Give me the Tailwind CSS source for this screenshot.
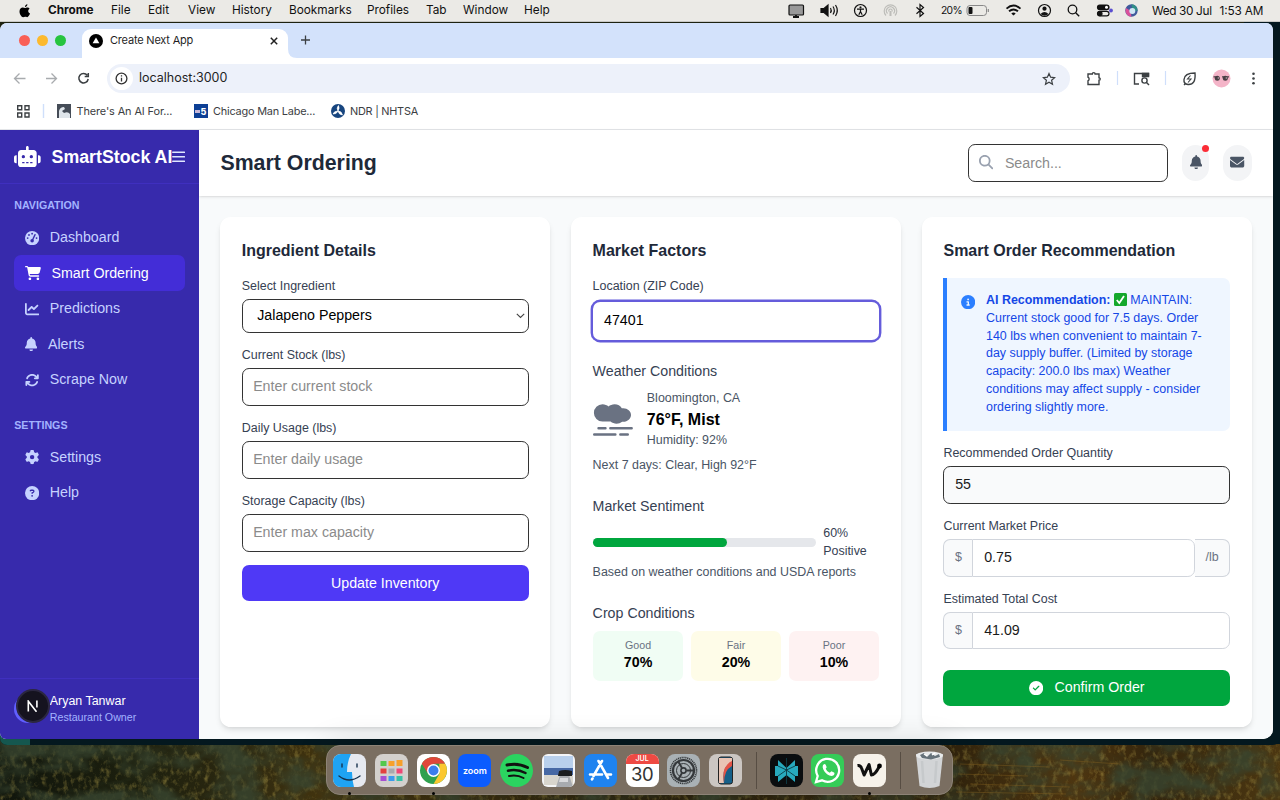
<!DOCTYPE html>
<html lang="en" class="text-[14.222px]">
<head>
<meta charset="utf-8">
<title>Smart Ordering</title>
<script src="https://cdn.jsdelivr.net/npm/@tailwindcss/browser@4"></script>
</head>
<body class="w-[1280px] h-[800px] overflow-hidden relative font-['Liberation_Sans',sans-serif] text-base bg-[#1d2210]">

<svg class="hidden">
  <symbol id="bell" viewBox="0 0 448 512"><path d="M224 0c-17.7 0-32 14.3-32 32V51.2C119 66 64 130.6 64 208v18.8c0 47-17.3 92.4-48.5 127.6l-7.4 8.3c-8.4 9.4-10.4 22.9-5.3 34.4S19.4 416 32 416H416c12.6 0 24-7.4 29.2-18.9s3.1-25-5.3-34.4l-7.4-8.3C401.3 319.2 384 273.9 384 226.8V208c0-77.4-55-142-128-156.8V32c0-17.7-14.3-32-32-32zm45.3 493.3c12-12 18.7-28.3 18.7-45.3H224 160c0 17 6.7 33.3 18.7 45.3s28.3 18.7 45.3 18.7s33.3-6.7 45.3-18.7z"/></symbol>
</svg>

<!-- Wallpaper -->
<svg class="absolute left-0 top-[738px]" width="1280" height="62" viewBox="0 0 1280 62">
  <defs>
    <linearGradient id="wp" x1="0" x2="1" y1="0" y2="0">
      <stop offset="0" stop-color="#10150c"/><stop offset=".1" stop-color="#1c1f0e"/><stop offset=".19" stop-color="#2c2810"/><stop offset=".25" stop-color="#43340f"/><stop offset=".5" stop-color="#2b2410"/><stop offset=".75" stop-color="#33250d"/><stop offset=".84" stop-color="#4f350f"/><stop offset=".9" stop-color="#33250d"/><stop offset="1" stop-color="#4c3711"/>
    </linearGradient>
    <filter id="leaf" x="0" y="0" width="100%" height="100%"><feTurbulence type="fractalNoise" baseFrequency=".19 .13" numOctaves="4" seed="21"/><feColorMatrix values="0 0 0 0 .52  0 0 0 0 .4  0 0 0 0 .08  2.6 0 0 0 -1.25"/></filter>
    <filter id="shade" x="0" y="0" width="100%" height="100%"><feTurbulence type="fractalNoise" baseFrequency=".023 .037" numOctaves="4" seed="5"/><feColorMatrix values="0 0 0 0 .04  0 0 0 0 .06  0 0 0 0 .03  3 0 0 0 -1.1"/></filter>
  </defs>
  <rect width="1280" height="62" fill="url(#wp)"/>
  <rect width="1280" height="62" filter="url(#leaf)" opacity=".42"/>
  <rect width="1280" height="62" filter="url(#shade)" opacity=".8"/>
  <g stroke="#8a6420" stroke-width="1" opacity=".4" fill="none"><path d="M960 26l90 3M958 36l70 2M970 46l100 3M1060 22l60 4M956 54l110 2"/></g>
</svg>
<div class="absolute right-0 top-[22px] w-10 h-[722px] bg-[#04181f]"></div>
<div class="absolute left-0 top-[725px] w-[1280px] h-[20px] rounded-b-lg bg-[#04181f] overflow-hidden"><div class="w-[30px] h-full bg-[#15574f]"></div></div>

<!-- Menu bar -->
<header class="absolute left-0 top-0 w-[1280px] h-[22px] bg-[#ebeae6] border-b border-[#c9c9c6] flex items-center justify-between text-[11.8px] leading-none text-[#111] font-[Inter,sans-serif]">
  <div class="flex items-center pl-[18px]">
    <svg class="w-[30px] h-[14px]" viewBox="0 0 30 14"><path d="M9.400 .2c.1 1.300-1 2.700-2.400 2.800C6.800 1.700 8 .4 9.400 .2zM11.600 4.700c-.9.6-1.400 1.300-1.400 2.400 0 1.200.7 2.100 1.800 2.500-.5 1.500-1.700 3.600-2.900 3.600-.7 0-1.100-.4-2-.4s-1.300.4-2 .4C3.500 13.200 1.500 10.200 1.500 7.500c0-2.500 1.600-4 3.300-4 .9 0 1.600.5 2.200.5.6 0 1.400-.6 2.500-.6.7 0 1.600.4 2.100 1.300z"/></svg>
    <span class="w-[63px] font-bold">Chrome</span><span class="w-[37px]">File</span><span class="w-[40px]">Edit</span><span class="w-[44px]">View</span><span class="w-[57px]">History</span><span class="w-[78px]">Bookmarks</span><span class="w-[59px]">Profiles</span><span class="w-[37px]">Tab</span><span class="w-[61px]">Window</span><span>Help</span>
  </div>
  <div class="flex items-center h-full">
    <svg class="w-[482px] h-[21px] shrink-0" viewBox="781 0 482 21" fill="none" stroke="#111" stroke-width="1.2">
      <rect x="789" y="5" width="14.500" height="10" rx="1" fill="#999"/><path d="M793 17h6M796 15v2" stroke-width="1.800"/>
      <path d="M821 8.500h3l4-3.500v11l-4-3.500h-3z" fill="#111"/><path d="M830.500 8q1.500 2.500 0 5M833 6.500q2.600 4 0 8M835.500 5q3.600 5.500 0 11"/>
      <circle cx="860.500" cy="10.500" r="6"/><circle cx="860.500" cy="7.300" r=".9" fill="#111" stroke-width=".3"/><path d="M857 9.200h7M860.500 9.500v2.500M860.500 11.500l-1.700 3.300M860.500 11.500l1.700 3.300"/>
      <g stroke="#bdbdb9"><path d="M886 15.500a6.300 6.300 0 1 1 9 0M887.500 13.500a4 4 0 1 1 6 0M889 11.500a1.700 1.700 0 1 1 3 0"/><path d="M890.500 11v5" stroke-width="2"/></g>
      <path d="M916.500 7.300l7 6.200-3.500 3V4.500l3.500 3-7 6.200" stroke-width="1.200"/>
      <text x="941" y="14" font-size="10.300" fill="#111" stroke="none" textLength="21.500">20%</text>
      <rect x="967" y="5.500" width="19.500" height="10" rx="3" stroke="#888" stroke-width="1"/><rect x="968.500" y="7" width="4" height="7" rx="1" fill="#111" stroke="none"/><path d="M988.300 9v3" stroke="#888"/>
      <g stroke-width="1.900"><path d="M1006.500 8.600q7-6 14 0M1009 11.300q4.500-3.800 9 0"/><path d="M1011.300 13.400q2.200-1.800 4.400 0l-2.200 2.200z" fill="#111" stroke="none"/></g>
      <circle cx="1044.500" cy="10.500" r="6"/><circle cx="1044.500" cy="8.700" r="2.100" fill="#111" stroke="none"/><path d="M1040.500 14q4-4 8 0-4 3.500-8 0z" fill="#111" stroke="none"/>
      <circle cx="1072.500" cy="9.500" r="4.300" stroke-width="1.300"/><path d="M1075.700 12.700l3.500 3.500" stroke-width="1.400"/>
      <rect x="1097.500" y="5" width="11.500" height="4.600" rx="2.300" fill="#111"/><circle cx="1106.500" cy="7.300" r="1.500" fill="#fff" stroke="none"/><rect x="1097.500" y="11.300" width="11.500" height="4.600" rx="2.300"/><circle cx="1100" cy="13.600" r="2" fill="#111"/><circle cx="1111" cy="10.500" r="1.900" fill="#5b4fd0" stroke="none"/>
      <g stroke="none"><circle cx="1131.500" cy="10.500" r="6.200" fill="#3f5a9c"/><path d="M1126 8a6.200 6.200 0 0 0 5.500 8.700l-1-6z" fill="#d9529b"/><path d="M1131.500 4.300a6.200 6.200 0 0 1 6 6.200l-5 1z" fill="#2f8f86"/><circle cx="1132.300" cy="11" r="3" fill="#cfe6f5"/></g>
      <text x="1152" y="14.500" font-size="11.800" fill="#111" stroke="none" textLength="60">Wed 30 Jul</text><text x="1219.500" y="14.500" font-size="11.800" fill="#111" stroke="none" textLength="44">1:53 AM</text>
    </svg>
    <div class="w-[17px]"></div>
  </div>
</header>

<!-- Browser window -->
<div class="absolute left-0 top-[23px] w-[1273px] h-[716px] rounded-tl-lg rounded-tr-lg rounded-br-[10px] rounded-bl-[6px] overflow-hidden bg-white flex flex-col">
  <div class="h-[35px] shrink-0 bg-[#d3e2fb] flex items-end font-[Inter,sans-serif]">
    <div class="w-[82px] h-full flex items-center gap-[7px] pl-[18.500px]"><i class="size-[11px] rounded-full bg-[#f95f56]"></i><i class="size-[11px] rounded-full bg-[#fcb92e]"></i><i class="size-[11px] rounded-full bg-[#26c43f]"></i></div>
    <div class="w-[206px] h-[29px] bg-white rounded-t-[9px] flex items-center pl-[7px] pb-[6px]">
      <svg class="w-[14px] h-[14px]" viewBox="0 0 14 14"><circle cx="7" cy="7" r="7"/><path d="M7 3.400l3.400 5.800H3.600z" fill="#fff"/></svg>
      <span class="ml-[7px] text-[11px] tracking-[-0.2px] leading-none text-[#1f1f1f] w-[160px]">Create Next App</span>
      <svg class="w-[8px] h-[8px] shrink-0" viewBox="0 0 8 8" stroke="#222" stroke-width="1.500"><path d="M.8.8l6.400 6.400M7.200.8L.8 7.200"/></svg>
    </div>
    <svg class="w-[36px] h-[35px]" viewBox="0 0 36 35" stroke="#3c4043" stroke-width="1.300" fill="none"><path d="M0 26q0 9 9 9H0z" fill="#fff" stroke="none"/><path d="M13 17h9M17.500 12.500v9"/></svg>
  </div>
  <div class="h-[42px] shrink-0 flex items-center font-[Inter,sans-serif]">
    <svg class="w-[107px] h-[42px] shrink-0" viewBox="0 58 107 42" fill="none" stroke="#a8abae" stroke-width="1.300"><path d="M25.500 78.500H15M19.500 73.500l-5 5 5 5M46 78.500h10.500M51.500 73.500l5 5-5 5"/><path d="M87.300 75.300a4.700 4.700 0 1 0 .9 3.700M88.300 73v3.500h-3.600" stroke="#3c4043" stroke-width="1.500"/></svg>
    <div class="w-[963px] h-[29px] rounded-full bg-[#edf1fa] flex items-center justify-between pl-[3px] pr-[14px] -mt-px">
      <div class="flex items-center"><div class="size-[23px] rounded-full bg-white flex items-center justify-center"><svg class="w-[13px] h-[13px]" viewBox="0 0 13 13" fill="none" stroke="#333" stroke-width="1.300"><circle cx="6.500" cy="6.500" r="5.400"/><path d="M6.500 5.700v3.800M6.500 3.300v1.300"/></svg></div><span class="ml-[6px] text-[12.500px] text-[#1f1f1f]">localhost:3000</span></div>
      <svg class="w-[14px] h-[14px]" viewBox="0 0 14 14" fill="none" stroke="#3c4043" stroke-width="1.200"><path d="M7 1.500l1.600 3.700 4 .4-3 2.700.9 4L7 10.200l-3.500 2.100.9-4-3-2.700 4-.4z"/></svg>
    </div>
    <svg class="w-[203px] h-[42px] shrink-0" viewBox="1070 58 203 42" fill="none" stroke="#3c4043" stroke-width="1.400">
      <path d="M1088 74h4.300a1.400 1.400 0 0 1 2.800 0h3.900v3.800a1.200 1.200 0 0 1 0 2.400v4.300h-11v-3.700a2 2 0 0 0 0-3.600z"/>
      <path d="M1117.500 71v14M1165.500 71v14" stroke="#cfdffb" stroke-width="1.200"/>
      <path d="M1139 84h-4.500V73.500h14v3"/><path d="M1142.500 73.500h6v3h-6z" fill="#3c4043"/><circle cx="1144.500" cy="80.500" r="2.600"/><path d="M1146.500 82.500l2.500 2.500"/>
      <path d="M1195 73q1 12-7 11.500-4.500-.5-4-5 .5-6.500 11-6.500zM1184 85l2-2"/><path d="M1190.500 75.500l-3 3.500h3.500l-3 3.500" stroke-width="1.100"/>
      <circle cx="1221.500" cy="78.500" r="9" fill="#f4b4c8" stroke="none"/><g fill="#4a3f45" stroke="none"><circle cx="1217.300" cy="78.300" r="2.500"/><circle cx="1225.300" cy="78.300" r="2.500"/><path d="M1213.500 76.300h4v1.200h-4zM1222 76.300h7v1.200h-7z"/></g><g fill="#c9b5bd" stroke="none"><circle cx="1218.300" cy="78" r=".7"/><circle cx="1226.300" cy="78" r=".7"/></g>
      <g fill="#3c4043" stroke="none"><circle cx="1253.500" cy="73.800" r="1.300"/><circle cx="1253.500" cy="78.500" r="1.300"/><circle cx="1253.500" cy="83.200" r="1.300"/></g>
    </svg>
  </div>
  <div class="h-[30.400px] shrink-0 border-b border-[#e3e5e8] flex items-center pb-[7.500px] text-[10.900px] tracking-[-0.1px] leading-none text-[#3c4043] font-[Inter,sans-serif]">
    <svg class="w-[57px] h-[20px]" viewBox="0 0 57 20" fill="none" stroke="#3c4043" stroke-width="1.400"><path d="M17.700 4.700h4v4h-4zM25 4.700h4v4h-4zM17.700 12h4v4h-4zM25 12h4v4h-4z"/><path d="M43.500 3v14" stroke="#cfdffb"/></svg>
    <svg class="w-[14px] h-[14px]" viewBox="0 0 14 14"><path fill="#454c57" d="M0 0h14v14H0z"/><path d="M2 14V7q1-4 5-4l1 2-3 2 2 2q4-2 6 1v4z" fill="#dfe5ea"/></svg><span class="ml-[5.500px] w-[117.500px] mt-[1px]">There's An AI For...</span>
    <svg class="w-[14px] h-[14px]" viewBox="0 0 14 14"><path fill="#0d3f95" d="M0 0h14v14H0z"/><path d="M1 6h5v3H1z" fill="#c9b8d8"/><text x="6.500" y="10.800" font-size="9" font-weight="800" fill="#fff">5</text></svg><span class="ml-[5px] w-[118px] mt-[1px] tracking-[-0.2px]">Chicago Man Labe...</span>
    <svg class="w-[14px] h-[14px]" viewBox="0 0 14 14"><circle cx="7" cy="7" r="7" fill="#17457f"/><path d="M7 7q-2-3 .5-5.500Q9 4 7 7q3.800.2 4.500 4Q8 11 7 7q-1.500 3.500-5 3Q3 7 7 7z" fill="#fff" stroke="#fff" stroke-width=".6"/></svg><span class="ml-[5px] mt-[1px] tracking-[-0.25px]">NDR | NHTSA</span>
  </div>

  <!-- App -->
  <div class="flex-1 min-h-0 flex">
    <aside class="w-56 shrink-0 bg-[#372aac] text-[#c6d2ff] flex flex-col">
      <div class="h-[53.600px] shrink-0 border-b border-[#3f2fbf] px-4 flex items-center text-white">
        <svg class="w-[26.700px] h-[21.300px] shrink-0" viewBox="0 0 640 512" fill="currentColor"><path d="M320 0c17.700 0 32 14.300 32 32V96H472c39.800 0 72 32.200 72 72V440c0 39.800-32.200 72-72 72H168c-39.800 0-72-32.200-72-72V168c0-39.800 32.200-72 72-72H288V32c0-17.700 14.300-32 32-32zM208 384c-8.800 0-16 7.200-16 16s7.200 16 16 16h32c8.800 0 16-7.200 16-16s-7.200-16-16-16H208zm96 0c-8.800 0-16 7.200-16 16s7.200 16 16 16h32c8.800 0 16-7.200 16-16s-7.200-16-16-16H304zm96 0c-8.800 0-16 7.200-16 16s7.200 16 16 16h32c8.800 0 16-7.200 16-16s-7.200-16-16-16H400zM264 256a40 40 0 1 0 -80 0 40 40 0 1 0 80 0zm152 40a40 40 0 1 0 0-80 40 40 0 1 0 0 80zM48 224H64V416H48c-26.500 0-48-21.500-48-48V272c0-26.500 21.500-48 48-48zm544 0c26.500 0 48 21.500 48 48v96c0 26.500-21.500 48-48 48H576V224h16z"/></svg>
        <span class="ml-3 w-[120px] text-xl font-bold whitespace-nowrap pt-px">SmartStock AI</span>
        <svg class="w-[13px] h-[14px] shrink-0" viewBox="0 0 13 14" stroke="#e0e7ff" stroke-width="1.600" stroke-linecap="round"><path d="M.8 2.300h11.600M.8 6.800h11.600M.8 11.300h11.600"/></svg>
      </div>
      <nav class="flex-1 p-4">
        <div class="text-xs font-bold text-[#a3b3ff] mb-[7.500px]">NAVIGATION</div>
        <a class="flex items-center px-3 py-2"><svg class="size-4 mr-3" viewBox="0 0 512 512"><circle cx="256" cy="256" r="256" fill="currentColor"/><g fill="#372aac"><circle cx="256" cy="96" r="32"/><circle cx="144" cy="144" r="32"/><circle cx="96" cy="256" r="32"/><circle cx="416" cy="256" r="32"/><circle cx="256" cy="352" r="64"/></g><path d="M262 340L362 130" stroke="#372aac" stroke-width="48" stroke-linecap="round"/></svg>Dashboard</a>
        <a class="flex items-center px-3 py-2 rounded-lg bg-[#432dd7] text-white"><svg class="w-[16px] h-[14.200px] mr-3" viewBox="0 0 576 512" fill="currentColor"><path d="M0 24C0 10.700 10.700 0 24 0H69.500c22 0 41.500 12.800 50.600 32h411c26.300 0 45.500 25 38.600 50.400l-41 152.300c-8.500 31.400-37 53.300-69.500 53.300H170.700l5.400 28.500c2.200 11.300 12.100 19.500 23.600 19.500H488c13.300 0 24 10.700 24 24s-10.700 24-24 24H199.700c-34.600 0-64.300-24.600-70.700-58.500L77.400 54.500c-.7-3.800-4-6.500-7.900-6.500H24C10.700 48 0 37.300 0 24zM128 464a48 48 0 1 1 96 0 48 48 0 1 1 -96 0zm336-48a48 48 0 1 1 0 96 48 48 0 1 1 0-96z"/></svg>Smart Ordering</a>
        <a class="flex items-center px-3 py-2"><svg class="size-4 mr-3" viewBox="0 0 512 512" fill="currentColor"><path d="M64 64c0-17.700-14.300-32-32-32S0 46.300 0 64V400c0 44.200 35.800 80 80 80H480c17.700 0 32-14.300 32-32s-14.300-32-32-32H80c-8.800 0-16-7.200-16-16V64zm406.600 86.600c12.500-12.500 12.500-32.800 0-45.300s-32.800-12.500-45.300 0L320 210.700l-57.400-57.400c-12.500-12.500-32.800-12.500-45.300 0l-112 112c-12.500 12.500-12.500 32.800 0 45.300s32.800 12.500 45.300 0L240 221.300l57.400 57.400c12.500 12.500 32.800 12.500 45.300 0l128-128z"/></svg>Predictions</a>
        <a class="flex items-center px-3 py-2"><svg class="w-[12.400px] h-[14.200px] mr-3" fill="currentColor"><use href="#bell"/></svg>Alerts</a>
        <a class="flex items-center px-3 py-2"><svg class="size-4 mr-3" viewBox="0 0 512 512" fill="currentColor"><path d="M105.100 202.600c7.700-21.800 20.200-42.300 37.800-59.800c62.500-62.500 163.800-62.500 226.300 0L386.300 160H352c-17.700 0-32 14.300-32 32s14.300 32 32 32H463.500h.4c17.700 0 32-14.300 32-32V80c0-17.700-14.300-32-32-32s-32 14.300-32 32v35.200L414.400 97.600c-87.500-87.500-229.300-87.500-316.800 0C73.200 122 55.600 150.700 44.800 181.400c-5.900 16.700 2.900 34.900 19.500 40.800s34.900-2.900 40.800-19.500zM39 289.300c-5 1.500-9.800 4.200-13.700 8.200c-4 4-6.700 8.800-8.100 14c-.3 1.200-.6 2.500-.8 3.800c-.3 1.700-.4 3.400-.4 5.100V432c0 17.700 14.300 32 32 32s32-14.300 32-32V396.900l17.600 17.500c87.500 87.400 229.300 87.400 316.700 0c24.400-24.400 42.100-53.100 52.900-83.700c5.900-16.700-2.900-34.900-19.500-40.800s-34.900 2.900-40.800 19.500c-7.700 21.800-20.200 42.300-37.800 59.800c-62.500 62.500-163.800 62.500-226.300 0l-.1-.1L125.600 352H160c17.700 0 32-14.300 32-32s-14.300-32-32-32H48.400c-1.600 0-3.200 .1-4.800 .3s-3.100 .5-4.600 1z"/></svg>Scrape Now</a>
        <div class="text-xs font-bold text-[#a3b3ff] mb-2 mt-[20.700px]">SETTINGS</div>
        <a class="flex items-center px-3 py-2"><svg class="size-4 mr-3" viewBox="0 0 512 512" fill="currentColor"><path d="M495.900 166.600c3.200 8.700 .5 18.400-6.400 24.600l-43.300 39.400c1.100 8.300 1.700 16.800 1.700 25.400s-.6 17.100-1.700 25.400l43.300 39.400c6.900 6.200 9.600 15.900 6.400 24.600c-4.400 11.900-9.700 23.300-15.800 34.300l-4.700 8.100c-6.600 11-14 21.400-22.100 31.200c-5.900 7.200-15.700 9.600-24.500 6.800l-55.700-17.700c-13.400 10.300-28.200 18.900-44 25.400l-12.500 57.100c-2 9.100-9 16.300-18.200 17.800c-13.800 2.300-28 3.500-42.500 3.500s-28.700-1.200-42.500-3.500c-9.200-1.500-16.200-8.700-18.200-17.800l-12.500-57.100c-15.800-6.500-30.600-15.100-44-25.400L83.100 425.900c-8.800 2.800-18.600 .3-24.500-6.800c-8.100-9.800-15.500-20.200-22.100-31.200l-4.700-8.100c-6.100-11-11.400-22.400-15.800-34.300c-3.200-8.700-.5-18.400 6.400-24.600l43.300-39.400C64.600 273.100 64 264.600 64 256s.6-17.100 1.700-25.400L22.400 191.200c-6.900-6.200-9.600-15.900-6.400-24.600c4.400-11.900 9.700-23.300 15.800-34.300l4.700-8.100c6.600-11 14-21.400 22.100-31.200c5.900-7.200 15.700-9.600 24.500-6.800l55.700 17.700c13.400-10.300 28.200-18.900 44-25.400l12.500-57.100c2-9.100 9-16.300 18.200-17.800C227.300 1.200 241.500 0 256 0s28.700 1.200 42.500 3.500c9.200 1.500 16.200 8.700 18.200 17.800l12.500 57.100c15.800 6.500 30.600 15.100 44 25.400l55.700-17.700c8.800-2.800 18.600-.3 24.500 6.800c8.100 9.800 15.500 20.200 22.100 31.200l4.700 8.100c6.100 11 11.400 22.400 15.800 34.300zM256 336a80 80 0 1 0 0-160 80 80 0 1 0 0 160z"/></svg>Settings</a>
        <a class="flex items-center px-3 py-2"><svg class="size-4 mr-3" viewBox="0 0 512 512"><circle cx="256" cy="256" r="256" fill="currentColor"/><path d="M192 174q8-22 31-22h58q39 2 39 39 0 22-20 34l-44 25v14" fill="none" stroke="#372aac" stroke-width="48" stroke-linecap="round"/><circle cx="256" cy="352" r="32" fill="#372aac"/></svg>Help</a>
      </nav>
      <div class="h-[61.500px] shrink-0 border-t border-[#3f2fbf] px-4 flex items-center">
        <div class="relative size-8 rounded-full bg-[#615fff] mr-2 shrink-0"><div class="absolute left-[2px] top-[-6px] size-[34px] rounded-full bg-[#15131f] border-2 border-[#2b2740] flex items-center justify-center"><svg class="w-[12px] h-[12px]" viewBox="0 0 12 12" fill="none" stroke="#fff" stroke-width="1.600"><path d="M1.300 11.500V1.200l8.200 10.600"/><path d="M9.900.5v7"/></svg></div></div>
        <div><div class="text-sm text-white">Aryan Tanwar</div><div class="text-xs text-[#a3b3ff] -mt-px">Restaurant Owner</div></div>
      </div>
    </aside>

    <div class="relative flex-1 min-w-0 flex flex-col bg-[#f8fafb]">
      <header class="h-[66px] shrink-0 bg-white shadow-sm px-6 flex items-center justify-between">
        <h1 class="text-2xl font-bold text-[#1e2939]">Smart Ordering</h1>
        <div class="flex items-center gap-4">
          <div class="w-[200px] h-[38px] border border-[#333] rounded-lg flex items-center px-[10px]">
            <svg class="size-4 -mt-[2px]" viewBox="0 0 512 512" fill="#99a1af"><path d="M416 208c0 45.900-14.900 88.300-40 122.700L502.600 457.400c12.500 12.500 12.500 32.800 0 45.300s-32.800 12.500-45.300 0L330.700 376c-34.400 25.200-76.800 40-122.700 40C93.100 416 0 322.900 0 208S93.100 0 208 0S416 93.100 416 208zM208 352a144 144 0 1 0 0-288 144 144 0 1 0 0 288z"/></svg>
            <span class="ml-[11.500px] text-[#8b8b8b]">Search...</span>
          </div>
          <div class="relative w-[26.700px] h-[35.500px] rounded-full bg-[#f3f4f6] flex items-center justify-center text-[#4a5565] -mt-px"><svg class="w-[12.400px] h-[14.200px] -mt-px" fill="currentColor"><use href="#bell"/></svg><i class="absolute top-0 right-0 size-[7px] rounded-full bg-[#fb2c36]"></i></div>
          <div class="w-[28.400px] h-[35.500px] rounded-full bg-[#f3f4f6] flex items-center justify-center text-[#4a5565] -mt-px"><svg class="size-4 -mt-px" viewBox="0 0 512 512" fill="currentColor"><path d="M48 64C21.500 64 0 85.500 0 112c0 15.100 7.100 29.300 19.200 38.400L236.800 313.600c11.400 8.500 27 8.500 38.400 0L492.800 150.400c12.100-9.100 19.200-23.300 19.200-38.400c0-26.500-21.500-48-48-48H48zM0 176V384c0 35.300 28.700 64 64 64H448c35.300 0 64-28.700 64-64V176L294.400 339.200c-22.800 17.100-54 17.100-76.800 0L0 176z"/></svg></div>
        </div>
      </header>

      <main class="p-6 pt-[21px] grid grid-cols-3 gap-6 text-[#364153]">
        <section class="bg-white rounded-xl shadow-md p-6 h-[509.500px]">
          <h2 class="text-lg font-bold text-[#1e2939] mb-[14.500px]">Ingredient Details</h2>
          <div class="text-sm mb-1">Select Ingredient</div>
          <div class="h-[33.500px] border border-[#333] rounded-lg flex items-center justify-between pl-[14.500px] pr-[3px] text-black mb-4">Jalapeno Peppers<svg class="w-[9px] h-[6px]" viewBox="0 0 9 6" fill="none" stroke="#444" stroke-width="1.100"><path d="M.8.8l3.700 3.700L8.200.8"/></svg></div>
          <div class="text-sm mb-1">Current Stock (lbs)</div>
          <div class="h-[37.400px] border border-[#333] rounded-lg flex items-center px-[10.400px] text-[#8b8b8b] mb-4">Enter current stock</div>
          <div class="text-sm mb-1">Daily Usage (lbs)</div>
          <div class="h-[37.400px] border border-[#333] rounded-lg flex items-center px-[10.400px] text-[#8b8b8b] mb-4">Enter daily usage</div>
          <div class="text-sm mb-1">Storage Capacity (lbs)</div>
          <div class="h-[37.400px] border border-[#333] rounded-lg flex items-center px-[10.400px] text-[#8b8b8b] mb-[13.800px]">Enter max capacity</div>
          <div class="h-[35.500px] rounded-lg bg-[#4f39f6] text-white flex items-center justify-center">Update Inventory</div>
        </section>

        <section class="bg-white rounded-xl shadow-md p-6 h-[509.500px]">
          <h2 class="text-lg font-bold text-[#1e2939] mb-[14.500px]">Market Factors</h2>
          <div class="text-sm mb-[6.400px]">Location (ZIP Code)</div>
          <div class="h-[37.400px] ring-[2.400px] ring-[#655cdb] rounded-lg flex items-center px-[11.400px] text-black mb-[21.700px]">47401</div>
          <h3 class="mb-2">Weather Conditions</h3>
          <div class="flex items-center text-[#4a5565] text-sm">
            <svg class="w-[40px] h-[34px] mr-4" viewBox="0 0 40 34" fill="#6a7282"><path d="M9.500 18.500A8.500 8.500 0 0 1 9.500 1.300c2.400 0 4.500.9 6 2.300C17 2.200 19.200 1.300 21.600 1.300c3.200 0 5.800 1.600 7.200 4 .5-.1 1-.1 1.500-.1 4.300 0 7.700 3 7.700 6.700s-3.400 6.800-7.700 6.800h-1.200c-1.500 1.300-3.400 2-5.600 2s-4.300-.9-5.900-2.200z"/><path d="M5.500 25.300h7M17.300 25.300H38.700M1.200 31.500h21.200M27.300 31.500h7.500" stroke="#6a7282" stroke-width="2.400" stroke-linecap="round"/></svg>
            <div><div>Bloomington, CA</div><div class="text-lg font-bold text-black">76°F, Mist</div><div>Humidity: 92%</div></div>
          </div>
          <div class="text-sm text-[#4a5565] mt-2">Next 7 days: Clear, High 92°F</div>
          <h3 class="mt-6 mb-2">Market Sentiment</h3>
          <div class="flex items-center text-sm"><div class="w-[223.500px] h-2.5 rounded-full bg-[#e5e7eb] mr-2"><div class="h-full rounded-full bg-[#00a63e]" style="width:60%"></div></div><div>60%<br>Positive</div></div>
          <div class="text-sm text-[#4a5565] mt-1">Based on weather conditions and USDA reports</div>
          <h3 class="mt-6 mb-[6.500px]">Crop Conditions</h3>
          <div class="grid grid-cols-3 gap-2 text-center">
            <div class="bg-[#f0fdf4] rounded-lg p-2"><div class="text-xs text-[#6a7282]">Good</div><div class="font-bold text-black">70%</div></div>
            <div class="bg-[#fefce8] rounded-lg p-2"><div class="text-xs text-[#6a7282]">Fair</div><div class="font-bold text-black">20%</div></div>
            <div class="bg-[#fef2f2] rounded-lg p-2"><div class="text-xs text-[#6a7282]">Poor</div><div class="font-bold text-black">10%</div></div>
          </div>
        </section>

        <section class="bg-white rounded-xl shadow-md p-6 h-[509.500px]">
          <h2 class="text-lg font-bold text-[#1e2939] mb-[14.300px]">Smart Order Recommendation</h2>
          <div class="bg-[#eff6ff] border-l-4 border-[#2b7fff] rounded-r-lg py-4 pl-[13.700px] pr-4 flex items-start text-sm text-[#1447e6] mb-4">
            <svg class="size-4 mr-3 mt-[2.500px] shrink-0" viewBox="0 0 512 512" fill="#2b7fff"><path d="M256 512A256 256 0 1 0 256 0a256 256 0 1 0 0 512zM216 336h24V272H216c-13.300 0-24-10.700-24-24s10.700-24 24-24h48c13.300 0 24 10.700 24 24v88h8c13.300 0 24 10.700 24 24s-10.700 24-24 24H216c-13.300 0-24-10.700-24-24s10.700-24 24-24zm40-208a32 32 0 1 1 0 64 32 32 0 1 1 0-64z" fill-rule="evenodd"/></svg>
            <p class="whitespace-nowrap"><b>AI Recommendation:</b> <svg class="inline-block w-[13px] h-[13px] align-[-2px]" viewBox="0 0 13 13"><rect width="13" height="13" rx="1.500" fill="#14a82c"/><path d="M2.800 7l2.500 3L10 3" fill="none" stroke="#fff" stroke-width="1.800"/></svg> MAINTAIN:<br>Current stock good for 7.5 days. Order<br>140 lbs when convenient to maintain 7-<br>day supply buffer. (Limited by storage<br>capacity: 200.0 lbs max) Weather<br>conditions may affect supply - consider<br>ordering slightly more.</p>
          </div>
          <div class="text-sm mb-1">Recommended Order Quantity</div>
          <div class="h-[37.400px] border border-[#333] bg-[#f9fafb] rounded-lg flex items-center px-[10.700px] text-[#1a1a1a] mb-4">55</div>
          <div class="text-sm mb-1">Current Market Price</div>
          <div class="h-[37.400px] flex mb-4">
            <div class="w-[29px] border border-r-0 border-[#d1d5dc] bg-[#f9fafb] rounded-l-lg flex items-center justify-center text-sm text-[#6a7282]">$</div>
            <div class="flex-1 border border-[#d1d5dc] rounded-r-lg flex items-center px-[10.700px] text-[#1a1a1a]">0.75</div>
            <div class="w-[35.500px] border border-l-0 border-[#d1d5dc] bg-[#f9fafb] rounded-r-lg flex items-center justify-center text-sm text-[#6a7282]">/lb</div>
          </div>
          <div class="text-sm mb-1">Estimated Total Cost</div>
          <div class="h-[37.400px] flex mb-[20.800px]">
            <div class="w-[29px] border border-r-0 border-[#d1d5dc] bg-[#f9fafb] rounded-l-lg flex items-center justify-center text-sm text-[#6a7282]">$</div>
            <div class="flex-1 border border-[#d1d5dc] rounded-r-lg flex items-center px-[10.700px] text-[#1a1a1a]">41.09</div>
          </div>
          <div class="h-[35.500px] rounded-lg bg-[#00a63e] text-white flex items-center justify-center"><svg class="size-4 mr-[11px]" viewBox="0 0 512 512" fill="currentColor"><path d="M256 512A256 256 0 1 0 256 0a256 256 0 1 0 0 512zM369 209L241 337c-9.400 9.400-24.600 9.400-33.900 0l-64-64c-9.400-9.400-9.400-24.600 0-33.900s24.600-9.400 33.900 0l47 47L335 175c9.400-9.400 24.600-9.400 33.900 0s9.400 24.600 0 33.900z"/></svg>Confirm Order</div>
        </section>
      </main>
    </div>
  </div>
</div>

<!-- Dock -->
<div class="absolute left-[326px] top-[745px] w-[627px] h-[50px] rounded-[14px] bg-[#7a6e61] border border-[#8d8377] shadow-[0_0_32px_rgba(0,0,0,0.16)] flex items-center pl-[6px] font-[Inter,sans-serif]">
  <div class="flex items-center gap-[8.800px]">
    <div class="relative"><svg class="size-[33px] rounded-[8px]" viewBox="0 0 33 33"><path fill="#e6e9f0" d="M0 0h33v33H0z"/><path d="M0 0h18q-4 8-4 18h5q0 8 2 15H0z" fill="#1fa3f3"/><path d="M9 10v3M24 10v3M6 22q10 8 21 0" stroke="#17324d" stroke-width="1.400" fill="none" stroke-linecap="round"/></svg><i class="absolute left-[15px] -bottom-[8px] size-[3px] rounded-full bg-black"></i></div>
    <svg class="size-[33px] rounded-[8px]" viewBox="0 0 33 33"><path fill="#d3d0cd" d="M0 0h33v33H0z"/><path fill="#54c84d" d="M5.500 7h6v5h-6z"/><path fill="#f7a02b" d="M13.500 7h6v5h-6zM21.500 6h6v6h-6z"/><path fill="#e3413e" d="M5.500 14.500h6v5h-6z"/><path fill="#a9a9ad" d="M13.500 14.500h6v5h-6z"/><path fill="#ee4776" d="M21.500 14.500h6v5h-6z"/><path fill="#a74fd2" d="M5.500 22h6v5h-6z"/><path fill="#3b9cec" d="M13.500 22h6v5h-6z"/><path fill="#37c1a5" d="M21.500 22h6v5h-6z"/></svg>
    <div class="relative"><svg class="size-[33px] rounded-[8px]" viewBox="0 0 33 33"><path fill="#fff" d="M0 0h33v33H0z"/><circle cx="16.500" cy="16.500" r="13.500" fill="#2fa04e"/><path d="M4.800 9.800A13.500 13.500 0 0 1 28.200 9.800H16.500l-6 9z" fill="#e0473a"/><path d="M28.200 9.800A13.500 13.500 0 0 1 16.500 30l5.800-10V9.800z" fill="#fbc72f"/><circle cx="16.500" cy="16.500" r="6.500" fill="#fff"/><circle cx="16.500" cy="16.500" r="5" fill="#3b7ded"/></svg><i class="absolute left-[15px] -bottom-[8px] size-[3px] rounded-full bg-black"></i></div>
    <div class="size-[33px] rounded-[8px] bg-[#0b5cff] text-white text-[9px] font-semibold flex items-center justify-center leading-none">zoom</div>
    <svg class="size-[33px]" viewBox="0 0 33 33" fill="none" stroke="#111" stroke-linecap="round"><circle cx="16.500" cy="16.500" r="16.500" fill="#2bd460" stroke="none"/><path d="M7 11q11-2.500 20.500 2.500" stroke-width="3"/><path d="M8 16.700q9.500-2 17.500 2.300" stroke-width="2.500"/><path d="M9 22q8-1.700 14.500 2" stroke-width="2"/></svg>
    <svg class="size-[33px] rounded-[6px]" viewBox="0 0 33 33"><path fill="#f4f5f7" d="M0 0h33v33H0z"/><path fill="#b9d0ec" d="M2 2h29v12H2z"/><path fill="#4768a4" d="M2 14h29v7H2z"/><path fill="#d8d5cd" d="M2 21h29v10H2z"/><path d="M14 33l4-12h9l4 12z" fill="#a8abb0"/><path d="M18 24h8v4h-9z" fill="#d9dadd"/><path d="M17 17q6-2 13 0v5H16z" fill="#1b1d20"/></svg>
    <svg class="size-[33px] rounded-[8px]" viewBox="0 0 33 33"><path fill="#1f83ef" d="M0 0h33v33H0z"/><g stroke="#fff" stroke-width="2.600" stroke-linecap="round"><path d="M18 7L9.500 22M14.500 7L24 24M6 20.500h12M22.500 20.500H27M8.500 24.500l-.5.800"/></g></svg>
    <div class="size-[33px] rounded-[8px] bg-white overflow-hidden flex flex-col items-center text-[#333]"><div class="w-full h-[10.500px] shrink-0 bg-[#ee4a43] text-white text-[7px] font-semibold text-center leading-[10px]">JUL</div><div class="text-[18.500px] leading-[21px] tracking-[-0.5px]">30</div></div>
    <svg class="size-[33px] rounded-[8px]" viewBox="0 0 33 33" fill="none" stroke="#34383b"><path fill="#a9b1b5" stroke="none" d="M0 0h33v33H0z"/><circle cx="16.500" cy="16.500" r="13" stroke-width="1.600" stroke-dasharray="1.200 .7"/><circle cx="16.500" cy="16.500" r="10.500" stroke-width="2.200"/><circle cx="16.500" cy="16.500" r="7" stroke-width="1"/><circle cx="16.500" cy="16.500" r="2.600" stroke-width="1.600"/><path d="M19.500 16.500H26.500M15 14l-3.500-6M15 19l-3.500 6" stroke-width="2"/></svg>
    <svg class="size-[33px] rounded-[8px]" viewBox="0 0 33 33"><path fill="#cbc6c2" d="M0 0h33v33H0z"/><rect x="9.500" y="3" width="14" height="27" rx="2.500" fill="#155f88" stroke="#222"/><path d="M10 4h13v4Q12 13 15 29h-5z" fill="#e9c4b4"/><path d="M23 7Q12 12 15 29q0-13 8-17z" fill="#e25347"/></svg>
  </div>
  <div class="w-px h-[37px] bg-[#574d43] ml-[13.500px] mr-[13px]"></div>
  <div class="flex items-center gap-[8.800px]">
    <svg class="size-[33px] rounded-[8px]" viewBox="0 0 33 33"><path d="M0 0h33v33H0z" fill="#0a0d0f"/><path d="M16.500 14L8 6v6H5v10h3v6l8.500-7 8.500 7v-6h3V12h-3V6z" fill="#27a9bd"/><path d="M16.500 4v26M16.500 16L8 12M16.500 16l8.500-4M16.500 16L8 22M16.500 16l8.500 6" stroke="#0d3b45" fill="none" stroke-width=".9"/></svg>
    <svg class="size-[33px] rounded-[8px]" viewBox="0 0 33 33"><path d="M0 0h33v33H0z" fill="#35cc58"/><path d="M5 28l1.700-6A11.500 11.500 0 1 1 11 26.300z" fill="none" stroke="#fff" stroke-width="2.300"/><path d="M12.500 10.500c-3 3 2.500 11 8 11.500 3 0 3.500-3 2.500-3.500l-2.500-1.200-1.800 1.500q-3-1.200-4-4l1-1.500-1-2.600q-1-1.200-2.200-.2z" fill="#fff"/></svg>
    <div class="relative"><svg class="size-[33px] rounded-[8px]" viewBox="0 0 33 33"><path d="M0 0h33v33H0z" fill="#f6f2ea"/><path d="M4.500 11.500q3-.5 4 2.500l2.600 7 5-10.500 2.300 10.500q3.500 0 7.600-8" fill="none" stroke="#111" stroke-width="3" stroke-linejoin="round"/><circle cx="26.500" cy="12" r="2.400"/></svg><i class="absolute left-[15px] -bottom-[8px] size-[3px] rounded-full bg-black"></i></div>
  </div>
  <div class="w-px h-[37px] bg-[#574d43] ml-[14px] mr-[14px]"></div>
  <svg class="w-[29px] h-[38px]" viewBox="0 0 29 38"><path d="M1 3h27l-3.500 32q-10 4-20 0z" fill="#d2d4d6"/><path d="M7 10l1.500 22M21.500 10L20 32" stroke="#c6c9cb" stroke-width="2.500"/><ellipse cx="14.500" cy="4.500" rx="13.500" ry="4" fill="#e8eaeb"/><path d="M5 4l4-2 3 4 4-4 4 3 4-2 1 3-9 2.500-9-1.500z" fill="#66727a"/><path d="M9 3l3 2M17 4l3-2" stroke="#fff" stroke-width="1.500"/></svg>
</div>
</body>
</html>
